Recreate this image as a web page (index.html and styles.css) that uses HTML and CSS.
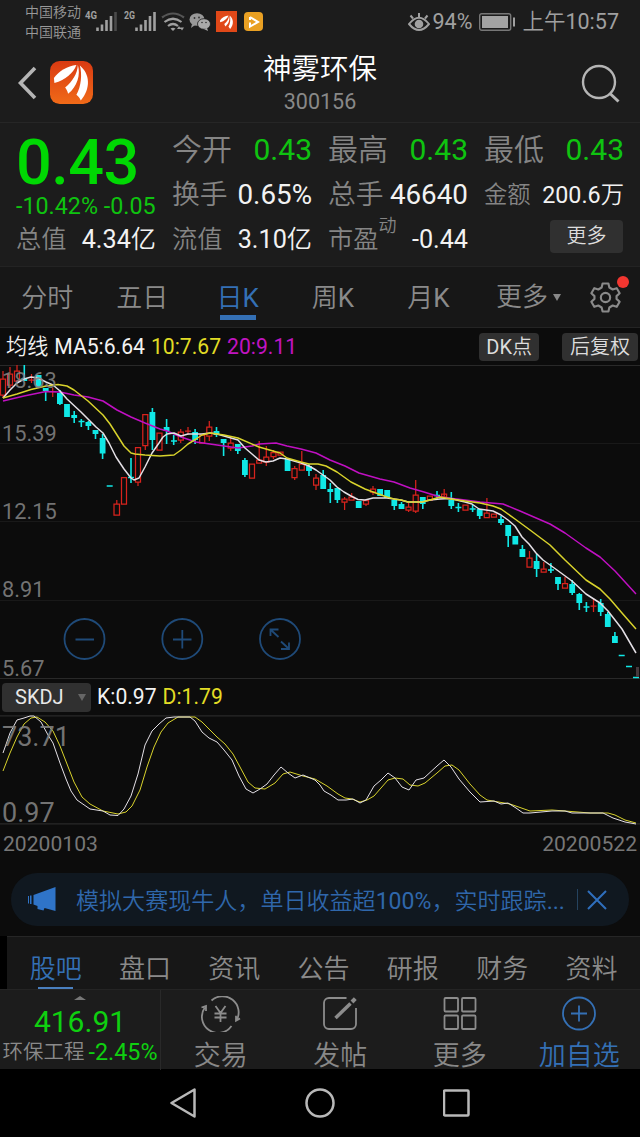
FILE: index.html
```html
<!DOCTYPE html>
<html lang="zh-CN">
<head>
<meta charset="utf-8">
<title>神雾环保 300156</title>
<link rel="stylesheet" href="styles.css">
</head>
<body>
<div class="statusbar">
  <div class="carriers"><span>中国移动</span><span>中国联通</span></div>
  <svg class="status-icons" width="184" height="43" viewBox="84 0 184 43">
    <g class="net"><text x="85" y="19" textLength="12" lengthAdjust="spacingAndGlyphs">4G</text><text x="124" y="19" textLength="11" lengthAdjust="spacingAndGlyphs">2G</text></g>
    <path d="M97.5 27.500v3.500M102 24.500v6.500M106.500 20v11M111 16v15M136.500 27.500v3.500M141 24.500v6.500M145.500 20v11M150 16v15M154.500 12v19" stroke="#a0a0a0" stroke-width="2.600"/>
    <path d="M115.500 12v19" stroke="#4a4a4a" stroke-width="2.600"/>
    <g fill="none" stroke-width="2.200"><path d="M162 17.500q11-8 22 0" stroke="#555"/><path d="M164.500 22q8.500-6.500 17 0M168 26q5-4 10 0" stroke="#a0a0a0"/></g>
    <path d="M170.500 28.500q2.500-1.500 5 0l-2.500 2.500zM177 29l2-3 2 3zM180 27.500h4l-2 3z" fill="#a0a0a0"/>
    <ellipse cx="197" cy="19.500" rx="7.500" ry="6.300" fill="#999"/><path d="M192 24l-1 4 4-3z" fill="#999"/>
    <ellipse cx="204" cy="24" rx="6.500" ry="5.300" fill="#aaa" stroke="#1c1c1c" stroke-width=".8"/><path d="M207 28l1 3-4-2z" fill="#aaa"/>
    <g fill="#333"><circle cx="194.500" cy="18" r=".9"/><circle cx="199" cy="17.500" r=".9"/><circle cx="202" cy="22.500" r=".8"/><circle cx="206" cy="22.500" r=".8"/></g>
    <rect x="216" y="11" width="21" height="21" fill="#e04818"/>
    <g transform="translate(220 14) scale(.37)" fill="#fff"><path d="M0 17.500C5 10 14 5 23 4C20 12 12 19 .5 22.500zM11.500 27C19 21 24 13 24.500 4C27.500 14 24 26 14.500 33.500zM23 34.500C28 26 29 13 26.500 4.500C37 13 38 28 27.500 40.500z"/></g>
    <rect x="244" y="12" width="19" height="19" rx="4" fill="#e9a023"/>
    <path d="M250 17v3M250 22.500v4l8-4.500-8-5" fill="none" stroke="#fff" stroke-width="2"/>
  </svg>
  <div class="status-right">
    <svg width="22" height="20" viewBox="0 0 22 20" fill="none" stroke="#a0a0a0" stroke-width="2"><path d="M1 12Q11-.5 21 12Q11 24 1 12zM11 5V1M5 6.500L2.500 3.500M17 6.500L19.500 3.500"/><circle cx="11" cy="12" r="3.300" fill="#a0a0a0"/></svg>
    <span class="pct">94%</span>
    <svg class="battery" width="37" height="18" viewBox="0 0 37 18"><rect x=".7" y=".7" width="31" height="16.600" rx="2" fill="none" stroke="#777" stroke-width="1.400"/><rect x="3" y="3" width="26" height="12" fill="#a3a3a3"/><path d="M35 4.500v9" stroke="#a0a0a0" stroke-width="2"/></svg>
    <span class="clock"><span class="cn">上午</span>10:57</span>
  </div>
</div>

<header class="header">
  <div class="header-left">
    <svg width="20" height="34" viewBox="0 0 20 34"><path d="M18 2L3.500 17L18 32" fill="none" stroke="#b5b5b5" stroke-width="3.600"/></svg>
    <svg width="43" height="43" viewBox="0 0 44 44"><defs><linearGradient id="lg" x2="0" y2="1"><stop stop-color="#d93a12"/><stop offset="1" stop-color="#f06a18"/></linearGradient></defs><rect width="44" height="44" rx="10" fill="url(#lg)"/><g fill="#fff"><path d="M4 17.500C9 10 18 5 27 4C24 12 16 19 4.500 22.500z"/><path d="M15.500 27C23 21 28 13 28.500 4C31.500 14 28 26 18.500 33.500C18 31 17 29 15.500 27z"/><path d="M27 34.500C32 26 33 13 30.500 4.500C41 13 42 28 31.500 40.500C30.500 38 29 36 27 34.500z"/></g></svg>
  </div>
  <div class="title"><div class="name">神雾环保</div><div class="code">300156</div></div>
  <svg class="search" width="40" height="40" viewBox="0 0 40 40" fill="none" stroke="#b5b5b5" stroke-width="2.400"><circle cx="19" cy="18" r="16"/><path d="M30 29.500L38.500 37.500" stroke-width="3"/></svg>
</header>

<section class="quote">
  <div class="qcol">
    <div class="price">0.43</div>
    <div class="change">-10.42% -0.05</div>
    <div class="cell r3"><span class="lb">总值</span><span>4.34<span class="cn">亿</span></span></div>
  </div>
  <div class="qcol">
    <div class="cell r1"><span class="lb">今开</span><span class="green">0.43</span></div>
    <div class="cell r2"><span class="lb">换手</span><span>0.65%</span></div>
    <div class="cell r3"><span class="lb">流值</span><span>3.10<span class="cn">亿</span></span></div>
  </div>
  <div class="qcol">
    <div class="cell r1"><span class="lb">最高</span><span class="green">0.43</span></div>
    <div class="cell r2"><span class="lb">总手</span><span>46640</span></div>
    <div class="cell r3"><span class="lb">市盈<span class="sup">动</span></span><span>-0.44</span></div>
  </div>
  <div class="qcol">
    <div class="cell r1"><span class="lb">最低</span><span class="green">0.43</span></div>
    <div class="cell r2 small"><span class="lb">金额</span><span>200.6<span class="cn">万</span></span></div>
    <div class="cell r3 end"><span class="morebtn">更多</span></div>
  </div>
</section>

<nav class="periods">
  <span class="p">分时</span><span class="p">五日</span><span class="p active">日<b>K</b></span><span class="p">周<b>K</b></span><span class="p">月<b>K</b></span>
  <span class="pmore">更多<i class="caret"></i></span>
  <span class="gear"><svg width="31" height="31" viewBox="0 0 32 32" fill="none" stroke="#8a8a8a" stroke-width="2.200" stroke-linejoin="round"><path d="M13 1.500h6l1 4.200 3.400 2 4.200-1.300 3 5.200-3.200 3v2.800l3.200 3-3 5.200-4.200-1.300-3.400 2-1 4.200h-6l-1-4.200-3.400-2-4.200 1.300-3-5.200 3.200-3v-2.800l-3.200-3 3-5.200 4.200 1.300 3.400-2z"/><circle cx="16" cy="16" r="4.800"/></svg><i class="dot"></i></span>
</nav>

<section class="kpanel">
  <div class="legend">
    <span class="cn">均线</span><span>MA5:6.64</span><span class="yellow">10:7.67</span><span class="magenta">20:9.11</span>
    <span class="tag first">DK<span class="cn">点</span></span><span class="tag cn">后复权</span>
  </div>
  <div class="chart">
    <svg width="640" height="314" viewBox="0 365 640 314" fill="none">
      <path d="M0 443.500H640M0 521.500H640M0 600.500H640" stroke="#191919"/>
      <path d="M0 365.500H640M0 678.500H640" stroke="#292929"/>
      <!-- rising candles: hollow bodies, then wicks -->
      <path class="up" d="M.5 379h5v16h-5zM7.500 374h5v11h-5zM14.500 371h5v10h-5zM114 504h5.500v11h-5.500zM121.500 477.500h5v26.500h-5zM135.500 447.500h5v34.500h-5zM142.800 414.500h5v31h-5zM157 433h5v17h-5zM178.300 432h5v8h-5zM199.700 435h5v8h-5zM206.800 427h5v9h-5zM228.200 443h5v5h-5zM249.500 464h5v14h-5zM256.700 460h5v3h-5zM263.800 457h5v5h-5zM271 452.500h5v4h-5zM278 452h5v3h-5zM292 468.500h5v9h-5zM299.300 464h5v6h-5zM313.600 478h5v7h-5zM342 499h5v3h-5zM349 497h5v3h-5zM363.500 500.500h5v3.500h-5zM370.500 489h5v3h-5zM406 507h5v3h-5zM413.200 495h5v16h-5zM427.400 496h5v4h-5zM441.600 494h5v3h-5zM463 505h5v5h-5zM484.300 513h5v4.500h-5zM491.400 514h5v3h-5zM527 558h5v9h-5zM541.200 569h5v3h-5zM562.500 583.500h5v4.500h-5z"/>
      <path class="up" d="M3 371v8M3 395v3M10 367v7M10 385v3M17 365v6M31.500 374v9M28.500 380h6M52.700 388v9M49 391.500h7M116.800 500v4M138 482v4M145.300 445v5M180.700 429v3M180.700 440v3M188 427v8M185 431h6M209.300 421v6M209.300 436v5M230.700 436v7M230.700 448v3M259.200 441v19M266.300 446v11M266.300 461v5M273.400 450v3M273.400 457v2M294.700 466v3M294.700 478v2M301.800 451v13M316 474v4M316 485v5M344.600 497v2M344.600 502v8M351.700 493v4M366 504v2M373 486v3M373 492v3M408.600 503v4M408.600 510v2M415.700 480v15M415.700 511v2M444.200 489v10M486.900 498v15M529.500 551v7M543.800 562v7M565 577v7M593.500 598v14M590.500 606h6"/>
      <!-- falling candles: solid bodies, then wicks -->
      <path class="down body" d="M24.300 378v3M38.600 375v12M45.700 388v3M59.900 393v11M67 404v13M74.200 415v3M88.400 422v4M95.500 430v4M102.600 438v15.500M152.400 412v28M166.600 427v4M195.100 432v8M216.500 431v4M223.600 439v4M237.800 444v7M244.900 460v15M287.600 459v12M309 466v5M323.200 475v14M330.300 489v3M337.400 488v12M358.700 501v7M380.100 489v7M387.200 490v8M394.300 500v6M401.500 504v5M422.800 497v7M451.300 500v6M479.700 509v7M501 519v4M508.200 525v11M515.300 536v8.500M522.400 549v8M536.600 561v8M558 577v7M572.200 584v9M579.300 594v9M600.700 603v9M607.800 614v13M614.900 636v7"/>
      <path class="down" d="M24.300 365v15M45.700 389v12M59.900 390v15M74.200 411v12M81.300 419v8M78.500 421.500h6M88.400 421v9M95.500 432v7M102.600 434v25M106.700 486h6M131 458v25M128 477.500h6M152.400 408v42M166.600 419v25M173.700 435v10M171 441h6M195.100 429v15M216.500 427v10M223.600 441v15M237.800 450v4M244.900 458v19M309 464v12M323.200 470v7M330.300 483v20M337.400 490v13M394.300 504v6M401.500 502v7M422.800 503v6M437 491v8M434 495.500h6M451.300 492v17M458.400 503v9M455.400 507.500h6M472.600 505v7M469.600 509h6M479.700 514v5M501 516v9M508.200 535v12M522.400 545v5M536.600 554v23M550.900 563v10M548 570h6M558 583v7M572.200 580v15M579.300 593v17M586.400 602v10M583.500 607h6M600.700 599v17M607.800 612v5M614.900 632v6M618.700 655.500h6M626 666.500h6M633 677.500h6"/>
      <path d="M637.500 667v10" stroke="#44383c" stroke-width="3"/>
      <polyline class="ma magenta-line" points="3,401 24,396 46,391.500 60,392 74,395 88,397 103,401 117,410 131,417 145,423 160,429 167,431 181,437 196,442 210,444 224,446 238,448 252,446 259,444 276,443 287,446 301,449 316,453 330,460 345,466 359,473 380,479 394,482 410,488 424,492 440,497 465,500 480,502 503,504 520,511 550,524 565,533 586,548 600,557 615,571 636,594"/>
      <polyline class="ma white-line" points="3,398 10,390 17,383 24,379 31,377 38,378 46,382 53,385 60,391 67,399 81,412 96,427 103,433 109,443 116,457 124,469 131,478 134,480 139,478 145,467 152,453 159,443 163,437 167,434 174,433 181,436 188,434 202,434 210,433 217,434 224,436 231,438 238,440 245,448 252,454 259,460 266,462 273,461 280,458 287,459 301,463 309,466 316,470 323,475 330,480 337,487 344,492 351,496 358,499.500 365,500 373,498 387,498 401,500 408,502 422,502 430,500 440,499 450,498.500 465,502 472,504 479,509 493,511 501,515 508,520 515,526 522,537 529,544 536,553 543,560 557,570 572,581 586,594 600,603 608,611 615,620 622,629 629,641 636,653"/>
      <polyline class="ma yellow-line" points="3,398 17,394 31,389.500 46,386 58,384.500 67,386 74,390 88,401 103,415 110,424 117,435 124,446 131,453 135,454 145,455 160,456 174,455 181,450 188,444 196,439 202,435 210,433 224,435 238,438 259,447 266,449 273,451 280,453 287,458 301,462 309,464 318,464 326,466 337,472 351,482 365,489 373,492 387,497 394,499 401,500 408,502 422,502 430,500 440,497 451,499 465,501 480,503 493,506 501,509 515,519 530,530 550,545 565,560 586,580 600,589 610,599 622,613 636,629"/>
      <g class="axis"><text x="2" y="388">18.63</text><text x="2" y="441">15.39</text><text x="2" y="519">12.15</text><text x="2" y="597">8.91</text><text x="2" y="676">5.67</text></g>
      <g stroke="#1f4a78" stroke-width="1.800"><circle cx="84.500" cy="639" r="20"/><circle cx="182.300" cy="639" r="20"/><circle cx="280" cy="639" r="20"/><path d="M75.500 639.500h18.500M173 639.500h18.500M182.300 630v18.500M270.500 636v-6.500h8M271 630l7.500 7M289 642.500v6.500h-8M288.500 648.500l-7.500-7"/></g>
    </svg>
  </div>
  <div class="legend sub"><span class="select">SKDJ<i class="caret"></i></span><span>K:0.97</span><span class="yellow">D:1.79</span></div>
  <div class="chart">
    <svg width="640" height="110" viewBox="0 715 640 110" fill="none">
      <path d="M0 715.800H640M0 823.800H640" stroke="#292929" stroke-width="1.300"/>
      <polyline class="osc yellow-line" points="3,771 10,753 17,737 24,724 31,718 37,717 45,722 53,731 60,746 67,764 74,782 82,797 90,804 103,811 118,814 126,812 132,806 140,790 147,767 154,747 161,732 168,723 178,717 195,717 202,722 210,730 217,737 225,744 233,754 240,767 248,782 255,788 265,789 275,783 283,774 290,772 303,776 315,779 327,786 338,794 345,798 352,799 360,802 367,800 374,796 381,788 388,780 395,778 403,779 410,785 418,786 425,783 437,773 445,766 452,765 459,770 470,784 480,795 487,800 510,804 530,811 552,810 565,811 590,813 608,813 615,815 625,820 636,823"/>
      <polyline class="osc white-line" points="3,753 10,733 17,720 24,718 30,716 34,716 41,722 48,735 53,743 60,763 66,779 71,791 77,800 90,809 103,811 110,815 118,815.500 124,809 131,796 138,774 145,745 152,731 159,724 166,718 174,717 190,717 195,721 202,732 209,738 217,742 224,750 232,760 239,776 246,789 253,793 260,789 267,784 274,775 281,767 288,773 295,778 303,775 315,780 320,785 324,791 331,795 338,800 346,800 353,799 360,803 366,800 374,786 381,780 388,773 395,778 402,787 409,790 416,780 424,778 437,766 444,760 451,767 459,779 470,792 480,802 494,801 501,804 508,803 516,808 523,813 530,813 552,811 565,811 572,813 590,813 603,813 613,818 625,822 636,824"/>
      <g class="axis big"><text x="2" y="745.500">73.71</text><text x="2" y="821.500">0.97</text></g>
    </svg>
  </div>
  <div class="dates"><span>20200103</span><span>20200522</span></div>
  <div class="banner">
    <svg width="28" height="25" viewBox="0 0 28 25" fill="#2f74c8"><path d="M27.500 0v24l-11-3-1 2.500-6-1.500v-3l-4-1.500v-9.500zM3.500 8.500v8.500h-1.500v-8.500zM0 9h1v7.500h-1z"/></svg>
    <span class="btext">模拟大赛现牛人，单日收益超<b>100%</b>，实时跟踪<b>...</b></span>
    <i class="vline"></i>
    <svg width="20" height="20" viewBox="0 0 20 20" stroke="#2f6fbd" stroke-width="2"><path d="M1 1L19 19M19 1L1 19"/></svg>
  </div>
</section>

<nav class="infotabs">
  <span class="on">股吧</span><span>盘口</span><span>资讯</span><span>公告</span><span>研报</span><span>财务</span><span>资料</span>
</nav>

<footer class="bottom">
  <div class="index">
    <i class="up-arrow"></i>
    <div class="idx">416.91</div>
    <div class="sector"><span class="cn">环保工程</span><span class="green">-2.45%</span></div>
  </div>
  <div class="act"><svg width="40" height="36" viewBox="0 0 40 36" fill="none" stroke="#8c8c8c" stroke-width="1.800"><path d="M10.500 4.500A16.200 16.200 0 0 1 35.500 24.500M3.800 11.500A16.200 16.200 0 0 0 30.500 30M.5 11.500l4.500-1.500v5M39 22.500l-4 2.300v-5M14.500 10l5 7 5-7M19.500 17v9M13.500 17.500h12M13.500 21.500h12"/></svg><span>交易</span></div>
  <div class="act"><svg width="40" height="36" viewBox="0 0 40 36" fill="none" stroke="#8c8c8c" stroke-width="1.800"><path d="M26.500 2H9a5 5 0 0 0-5 5v21a5 5 0 0 0 5 5h22a5 5 0 0 0 5-5V12"/><path d="M15.500 22L30.500 7.500" stroke-width="3.500"/><path d="M32 6L35.300 2.700" stroke-width="4"/></svg><span>发帖</span></div>
  <div class="act"><svg width="40" height="36" viewBox="0 0 40 36" fill="none" stroke="#8c8c8c" stroke-width="1.800"><rect x="4.500" y="2" width="13.500" height="13.500" rx="1"/><rect x="22" y="2" width="13.500" height="13.500" rx="1"/><rect x="4.500" y="19.500" width="13.500" height="13.500" rx="1"/><rect x="22" y="19.500" width="13.500" height="13.500" rx="1"/></svg><span>更多</span></div>
  <div class="act blue"><svg width="40" height="36" viewBox="0 0 40 36" fill="none" stroke="#3470b5" stroke-width="1.800"><circle cx="20" cy="17.500" r="16"/><path d="M12 17.500h16M20 9.500v16"/></svg><span>加自选</span></div>
</footer>

<div class="sysnav">
  <svg width="28" height="32" viewBox="0 0 28 32"><path d="M24.500 2.500v27L1.500 16z"/></svg>
  <svg width="32" height="32" viewBox="0 0 32 32"><circle cx="16" cy="16" r="13.500"/></svg>
  <svg width="28" height="32" viewBox="0 0 28 32"><rect x="1" y="3.500" width="24.500" height="25" rx="1"/></svg>
</div>
</body>
</html>
```

FILE: styles.css
```css
* { box-sizing: border-box; }
body {
  margin: 0;
  width: 640px;
  height: 1137px;
  overflow: hidden;
  background: #000;
  color: #f2f2f2;
  font-family: Roboto, "Noto Sans CJK SC", sans-serif;
}
svg { display: block; flex: none; }
i { display: block; flex: none; }
b { font-weight: 400; }
.cn { font-weight: 350; }
.green { color: #0fc310; }
.yellow { color: #e2dc25; }
.magenta { color: #c114c1; }

.statusbar { display: flex; align-items: center; height: 43px; padding: 0 21px 0 25px; background: #1c1c1c; color: #a0a0a0; }
.carriers { display: flex; flex-direction: column; width: 59px; font-size: 14px; line-height: 20px; font-weight: 350; white-space: nowrap; color: #999; }
.status-icons { flex: none; }
.net { font-size: 11px; font-weight: 700; fill: #a0a0a0; }
.status-right { display: flex; align-items: center; margin-left: auto; font-size: 21.500px; line-height: 30px; padding-top: 1px; }
.pct { margin: 0 7px 0 3px; }
.clock { margin-left: 6px; }

.header { display: grid; grid-template-columns: 1fr 200px 1fr; height: 80px; background: #1c1c1c; border-bottom: 1px solid #262626; align-items: start; }
.header-left { display: flex; align-items: center; gap: 13px; padding: 18px 0 0 17px; }
.title { text-align: center; padding-top: 9px; }
.name { font-size: 28.500px; line-height: 36px; font-weight: 350; color: #fff; }
.code { font-size: 21.500px; line-height: 26px; color: #888; padding-top: 1px; }
.search { margin: 21px 20px 0 auto; }

.quote { display: grid; grid-template-columns: repeat(4, 140px); gap: 16px; height: 143px; padding: 5px 0 0 16px; background: #1c1c1c; }
.price { font-size: 63px; line-height: 64px; padding-top: 3px; font-weight: 500; color: #00d803; letter-spacing: -.5px; }
.change { font-size: 23.300px; line-height: 22px; height: 21px; color: #0fc310; white-space: nowrap; }
.cell { display: flex; justify-content: space-between; align-items: center; height: 44px; white-space: nowrap; }
.lb { font-weight: 350; color: #858585; position: relative; }
.r1 { font-size: 30px; line-height: 40px; padding-bottom: 1px; }
.r2 { font-size: 27.800px; line-height: 40px; padding-top: 2px; }
.r3 { font-size: 25.200px; line-height: 36px; padding-top: 4px; }
.small { font-size: 23.300px; }
.end { align-items: flex-start; justify-content: flex-end; padding-top: 4px; padding-right: 1px; }
.sup { position: absolute; left: 100%; top: -10px; font-size: 18px; line-height: 28px; }
.morebtn { width: 73px; height: 33px; line-height: 33px; border-radius: 4px; background: #303030; text-align: center; font-size: 20px; font-weight: 350; color: #ddd; }

.periods { display: flex; height: 61px; background: #171717; border-top: 1px solid #232323; font-size: 26px; line-height: 62px; font-weight: 350; color: #8a8a8a; }
.p { width: 95.400px; text-align: center; }
.p:first-child { width: 94.500px; }
.active { color: #3470b5; background: linear-gradient(#3470b5, #3470b5) 50% 48px / 36px 5px no-repeat; }
.pmore { display: flex; align-items: center; gap: 5px; margin-left: 20px; }
.caret { width: 0; height: 0; border: 4.500px solid transparent; border-top: 7px solid #888; border-bottom: 0; }
.gear { position: relative; padding: 15px 0 0; margin-left: 29px; }
.dot { position: absolute; left: 27px; top: 9px; width: 12px; height: 12px; border-radius: 50%; background: #f23630; }

.kpanel { height: 609px; background: #0c0c0c; border-top: 1px solid #242424; }
.legend { display: flex; align-items: center; gap: 6px; height: 37px; padding-left: 6px; font-size: 21.150px; line-height: 30px; white-space: nowrap; }
.tag { padding: 0 8px; height: 28px; line-height: 28px; border-radius: 4px; background: #303030; font-size: 20px; color: #ddd; }
.tag.first { margin-left: auto; margin-right: 17px; padding: 0 7px; }
.tag.cn { margin-right: 2px; }
.axis { font-size: 21.800px; fill: #828282; fill-opacity: .88; }
.axis.big { font-size: 27px; }
.up { stroke: #d8231d; stroke-width: 1.250; }
.down { stroke: #10e8e6; stroke-width: 1.600; }
.body { stroke-width: 5.800; }
.ma { stroke-width: 1.500; stroke-linejoin: round; }
.osc { stroke-width: 1; stroke-linejoin: round; }
.white-line { stroke: #e4e0e6; }
.yellow-line { stroke: #d9d32c; }
.magenta-line { stroke: #c010c2; }
.sub { height: 36px; padding-left: 2px; }
.select { display: flex; align-items: center; justify-content: space-between; width: 89px; height: 29px; padding: 0 5px 0 13px; border-radius: 4px; background: #303030; font-size: 20px; color: #e8e8e8; }
.select .caret { border-top-color: #666; }
.dates { display: flex; justify-content: space-between; height: 48px; padding: 4px 3px 0 3px; font-size: 21.100px; line-height: 30px; color: #777; }
.banner { display: flex; align-items: center; width: 618px; height: 53px; margin-left: 11px; padding: 0 22px 0 17px; border-radius: 27px; background: #101820; color: #2f67ab; }
.btext { margin-left: 20px; padding-top: 4px; font-size: 23.050px; line-height: 50px; font-weight: 350; white-space: nowrap; }
.vline { width: 1px; height: 21px; margin: 0 9px 0 auto; background: #25435f; }

.infotabs { display: grid; grid-template-columns: repeat(7, 89.300px); height: 53px; margin-left: 7px; padding-left: 4px; background: #171717; border-top: 1px solid #262626; font-size: 26px; line-height: 64px; font-weight: 350; color: #8a8a8a; text-align: center; }
.infotabs .on { color: #3470b5; background: linear-gradient(#4a7fbe, #4a7fbe) 50% 50px / 35px 2px no-repeat; }

.bottom { display: grid; grid-template-columns: 161px repeat(4, 119.500px); height: 80px; background: #1c1c1c; border-top: 1px solid #242424; }
.index { display: flex; flex-direction: column; align-items: center; border-right: 1px solid #292929; }
.up-arrow { width: 0; height: 0; margin-top: 6px; border: 6px solid transparent; border-bottom: 4px solid #777; border-top: 0; }
.idx { font-size: 30px; line-height: 34px; margin-top: 5px; color: #0fd010; }
.sector { display: flex; gap: 4px; align-items: center; font-size: 20.500px; line-height: 26px; color: #8a8a8a; white-space: nowrap; }
.sector .green { font-size: 23.300px; color: #0fd010; }
.act { display: flex; flex-direction: column; align-items: center; padding-top: 6px; font-size: 27px; line-height: 38px; font-weight: 350; color: #888; white-space: nowrap; }
.act span { margin-top: 5px; height: 33px; }
.blue { color: #3470b5; }

.sysnav { display: flex; justify-content: center; align-items: center; gap: 106.500px; height: 68px; background: #000; }
.sysnav svg { fill: none; stroke: #b8b8b8; stroke-width: 2.500; stroke-linejoin: round; }
```
